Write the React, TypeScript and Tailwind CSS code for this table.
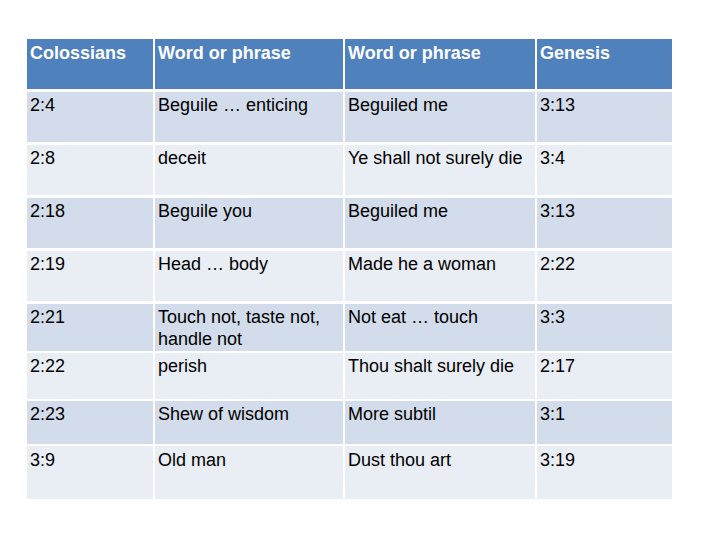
import React from "react";

type Row = { cells: string[]; bg: string; h: string; mt: string; pt: string };

const rows: Row[] = [
  { cells: ["2:4", "Beguile … enticing", "Beguiled me", "3:13"], bg: "bg-[#d3dcea]", h: "h-[50px]", mt: "mt-[3px]", pt: "pt-[2px]" },
  { cells: ["2:8", "deceit", "Ye shall not surely die", "3:4"], bg: "bg-[#e9edf4]", h: "h-[50px]", mt: "mt-[3px]", pt: "pt-[2px]" },
  { cells: ["2:18", "Beguile you", "Beguiled me", "3:13"], bg: "bg-[#d3dcea]", h: "h-[50px]", mt: "mt-[3px]", pt: "pt-[2px]" },
  { cells: ["2:19", "Head … body", "Made he a woman", "2:22"], bg: "bg-[#e9edf4]", h: "h-[50px]", mt: "mt-[3px]", pt: "pt-[2px]" },
  { cells: ["2:21", "Touch not, taste not, handle not", "Not eat … touch", "3:3"], bg: "bg-[#d3dcea]", h: "h-[47px]", mt: "mt-[3px]", pt: "pt-[2px]" },
  { cells: ["2:22", "perish", "Thou shalt surely die", "2:17"], bg: "bg-[#e9edf4]", h: "h-[46px]", mt: "mt-[2px]", pt: "pt-[2px]" },
  { cells: ["2:23", "Shew of wisdom", "More subtil", "3:1"], bg: "bg-[#d3dcea]", h: "h-[43px]", mt: "mt-[2px]", pt: "pt-[2px]" },
  { cells: ["3:9", "Old man", "Dust thou art", "3:19"], bg: "bg-[#e9edf4]", h: "h-[53px]", mt: "mt-[2px]", pt: "pt-[3px]" },
];

const header = ["Colossians", "Word or phrase", "Word or phrase", "Genesis"];

export default function App() {
  return (
    <div
      className="w-[720px] h-[540px] bg-white pt-[39px] pl-[27px]"
      style={{ fontFamily: '"Liberation Sans", Arial, sans-serif' }}
    >
      <div className="flex flex-col w-[645px]">
        <div className="grid grid-cols-[126px_188px_190px_135px] gap-x-[2px] h-[50px]">
          {header.map((t, i) => (
            <div key={i} className="bg-[#4f81bd] text-white font-bold text-[18px] leading-[22px] pt-[3px] pl-[3px]">
              {t}
            </div>
          ))}
        </div>
        {rows.map((r, ri) => (
          <div key={ri} className={`grid grid-cols-[126px_188px_190px_135px] gap-x-[2px] ${r.h} ${r.mt}`}>
            {r.cells.map((t, i) => (
              <div key={i} className={`${r.bg} text-black text-[18px] leading-[22px] ${r.pt} pl-[3px] pr-[2px]`}>
                {t}
              </div>
            ))}
          </div>
        ))}
      </div>
    </div>
  );
}
